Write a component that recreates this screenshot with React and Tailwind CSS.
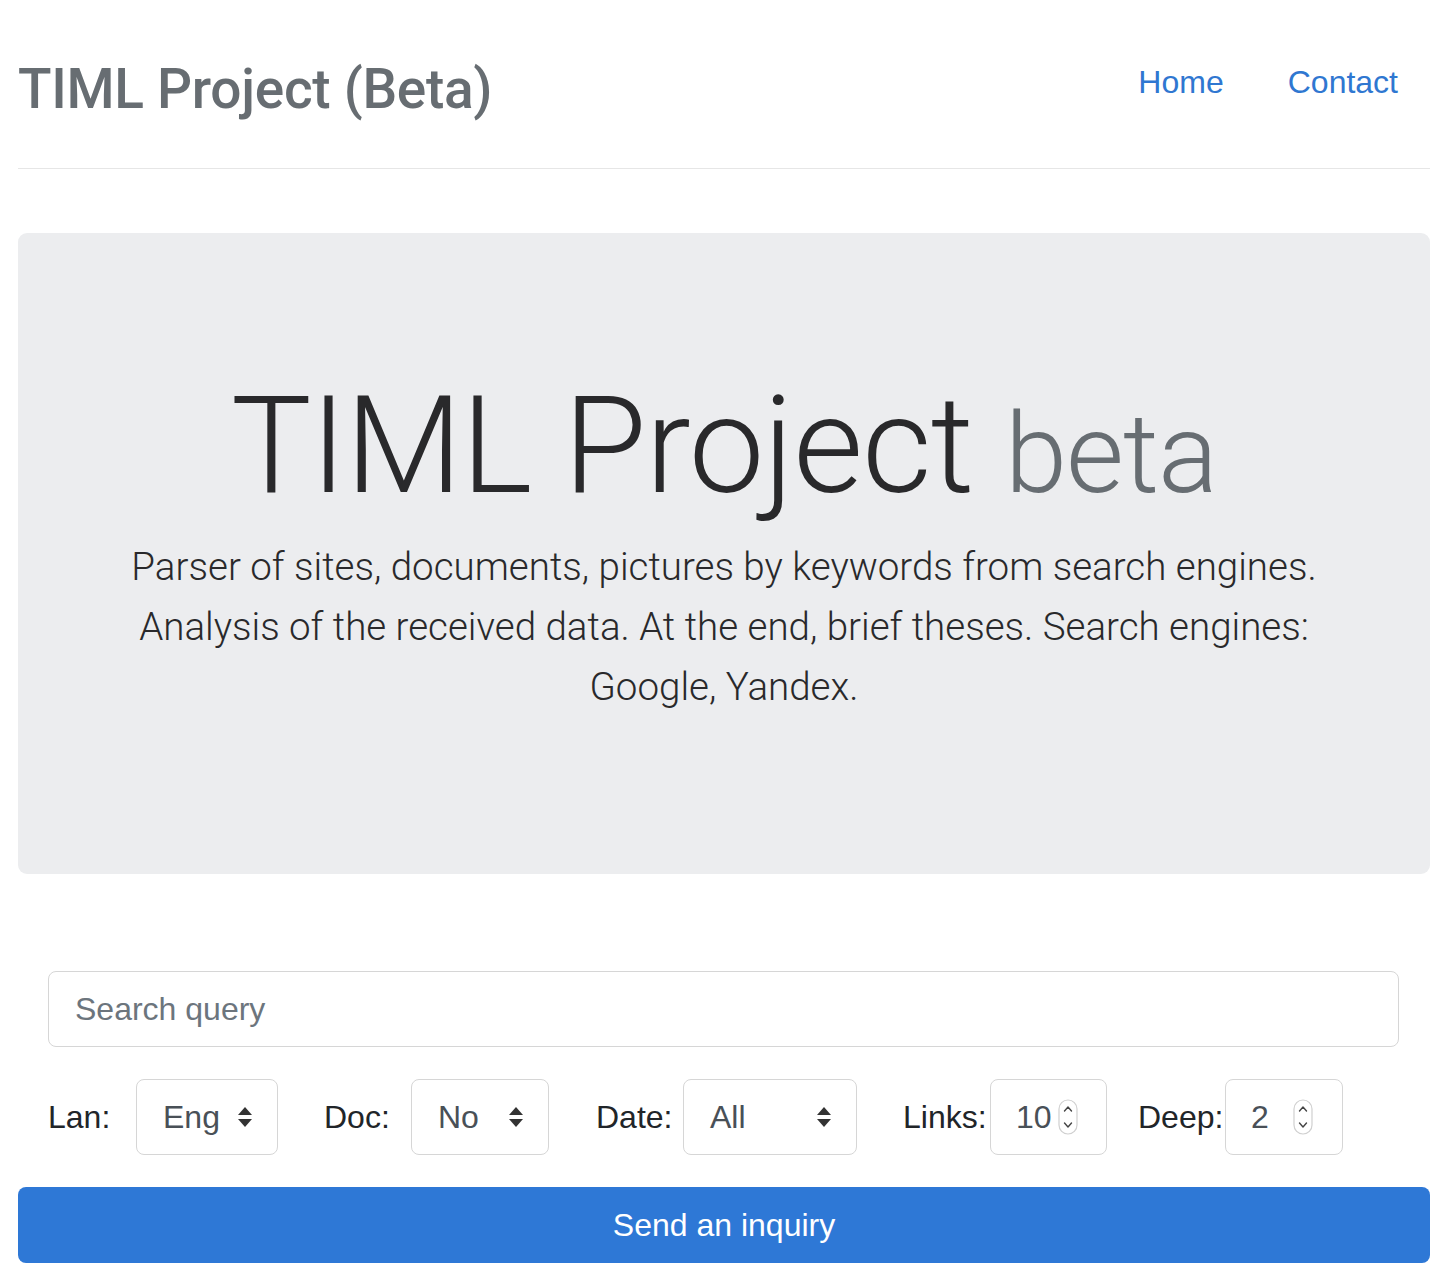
import React from 'react';

const sans = { fontFamily: '"Liberation Sans", Arial, sans-serif' };

function Arrows() {
  return (
    <svg width="16" height="24" viewBox="0 0 16 24" className="shrink-0">
      <path d="M8 2 L15 10 L1 10 Z" fill="#333" />
      <path d="M8 22 L15 14 L1 14 Z" fill="#333" />
    </svg>
  );
}

function Spinner() {
  return (
    <svg width="20" height="36" viewBox="0 0 20 36" className="shrink-0">
      <rect x="1" y="1" width="18" height="34" rx="9" fill="#fff" stroke="#d0d0d0" strokeWidth="1.2" />
      <path d="M6.5 12 L10 8 L13.5 12" fill="none" stroke="#444" strokeWidth="1.4" strokeLinecap="round" strokeLinejoin="round" />
      <path d="M6.5 24 L10 28 L13.5 24" fill="none" stroke="#444" strokeWidth="1.4" strokeLinecap="round" strokeLinejoin="round" />
    </svg>
  );
}

function Select({ label, value, width, labelW, gapBefore }) {
  return (
    <div className={`flex items-center ${gapBefore}`}>
      <span className={`${labelW} text-[32px] text-[#212529]`}>{label}</span>
      <div className={`${width} h-[76px] border border-[#d6d6d6] rounded-[8px] flex items-center justify-between pl-[26px] pr-[24px] text-[32px] text-[#495057]`}>
        <span>{value}</span>
        <Arrows />
      </div>
    </div>
  );
}

function NumberBox({ label, value, width, gapBefore, spacer }) {
  return (
    <div className={`flex items-center ${gapBefore}`}>
      <span className="w-[87px] text-[32px] text-[#212529]">{label}</span>
      <div className={`${width} h-[76px] border border-[#d6d6d6] rounded-[8px] flex items-center pl-[25px] text-[32px] text-[#495057]`}>
        <span className={spacer}>{value}</span>
        <Spinner />
      </div>
    </div>
  );
}

export default function App() {
  return (
    <div className="min-h-screen bg-white" style={sans}>
      <header className="ml-[18px] mr-[20px] h-[169px] border-b border-[#e6e6e6] flex items-center justify-between pt-[10px]">
        <h1 className="text-[55px] font-medium text-[#676d72] tracking-[-0.3px]" style={{ fontFamily: 'Roboto, "Liberation Sans", sans-serif' }}>
          TIML Project (Beta)
        </h1>
        <nav className="flex text-[32px] text-[#2f77d1] -mt-[14px]">
          <a href="#" className="px-[32px]">Home</a>
          <a href="#" className="px-[32px]">Contact</a>
        </nav>
      </header>

      <section
        className="ml-[18px] mr-[20px] mt-[64px] h-[641px] bg-[#ecedef] rounded-[9px] flex flex-col items-center pt-[132px]"
        style={{ fontFamily: 'Roboto, "Liberation Sans", sans-serif' }}
      >
        <h2 className="text-[135px] font-light leading-[1.2] text-[#29292b] tracking-[-1px]">
          TIML Project <span className="text-[112px] text-[#676d72] tracking-[-1px]">beta</span>
        </h2>
        <p className="mt-[10px] text-[38.5px] font-light leading-[60px] text-[#29292b] text-center max-w-[1220px]">
          Parser of sites, documents, pictures by keywords from search engines.
          Analysis of the received data. At the end, brief theses. Search engines:
          Google, Yandex.
        </p>
      </section>

      <form className="mt-[97px]" onSubmit={e => e.preventDefault()}>
        <div className="ml-[48px] mr-[51px] h-[76px] border border-[#d6d6d6] rounded-[8px] flex items-center px-[26px]">
          <input
            type="text"
            placeholder="Search query"
            className="w-full outline-none text-[32px] text-[#495057] placeholder:text-[#6c757d] bg-transparent"
          />
        </div>

        <div className="mt-[32px] ml-[48px] flex items-center">
          <Select label="Lan:" value="Eng" width="w-[142px]" labelW="w-[88px]" gapBefore="" />
          <Select label="Doc:" value="No" width="w-[138px]" labelW="w-[87px]" gapBefore="ml-[46px]" />
          <Select label="Date:" value="All" width="w-[174px]" labelW="w-[87px]" gapBefore="ml-[47px]" />
          <NumberBox label="Links:" value="10" width="w-[117px]" gapBefore="ml-[46px]" spacer="mr-[6px]" />
          <NumberBox label="Deep:" value="2" width="w-[118px]" gapBefore="ml-[31px]" spacer="mr-[24px]" />
        </div>

        <button
          type="submit"
          className="mt-[32px] ml-[18px] w-[1412px] h-[76px] bg-[#2e78d6] rounded-[8px] text-white text-[32px]"
        >
          Send an inquiry
        </button>
      </form>
    </div>
  );
}
